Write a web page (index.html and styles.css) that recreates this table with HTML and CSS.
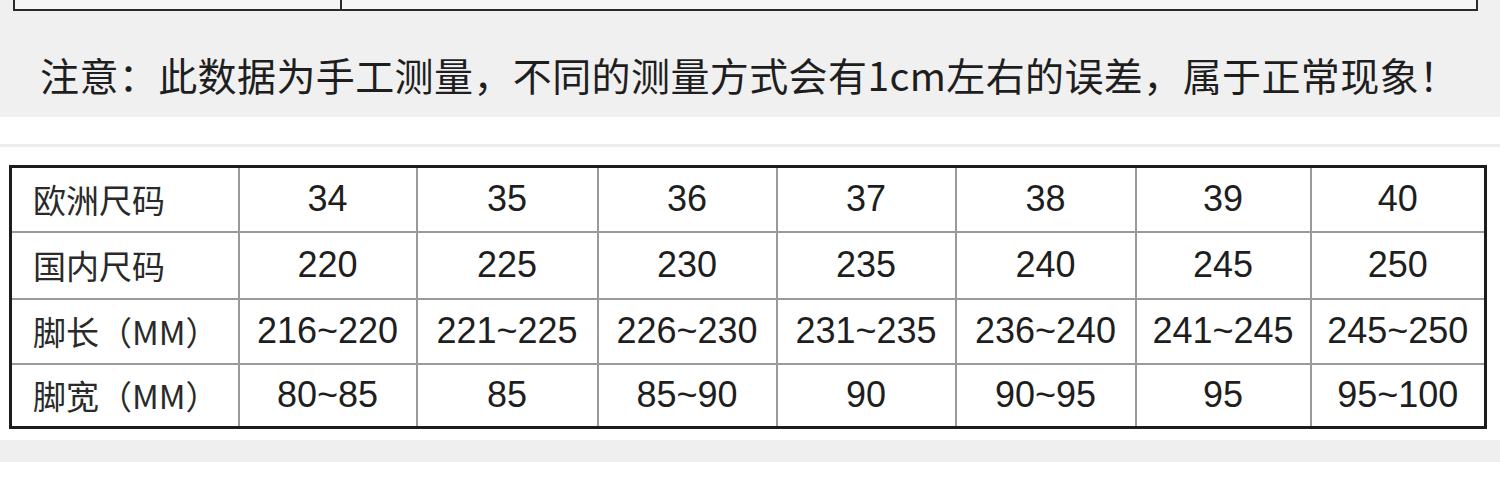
FILE: index.html
```html
<!DOCTYPE html>
<html lang="zh-CN">
<head>
<meta charset="utf-8">
<title>尺码表</title>
<link rel="stylesheet" href="styles.css">
</head>
<body>
<section class="top">
  <div class="prev-table">
    <div class="prev-cell prev-first"></div>
    <div class="prev-cell"></div>
  </div>
  <p class="notice">注意：此数据为手工测量，不同的测量方式会有1cm左右的误差，属于正常现象！</p>
</section>
<div class="gap"></div>
<section class="table-wrap">
  <table class="size-table">
    <colgroup>
      <col class="c-label">
      <col class="c1"><col class="c2"><col class="c3"><col class="c4"><col class="c5"><col class="c6"><col class="c7">
    </colgroup>
    <tbody>
      <tr class="r1">
        <th>欧洲尺码</th><td>34</td><td>35</td><td>36</td><td>37</td><td>38</td><td>39</td><td>40</td>
      </tr>
      <tr class="r2">
        <th>国内尺码</th><td>220</td><td>225</td><td>230</td><td>235</td><td>240</td><td>245</td><td>250</td>
      </tr>
      <tr class="r3">
        <th>脚长（MM）</th><td>216~220</td><td>221~225</td><td>226~230</td><td>231~235</td><td>236~240</td><td>241~245</td><td>245~250</td>
      </tr>
      <tr class="r4">
        <th>脚宽（MM）</th><td>80~85</td><td>85</td><td>85~90</td><td>90</td><td>90~95</td><td>95</td><td>95~100</td>
      </tr>
    </tbody>
  </table>
</section>
<div class="band"></div>
</body>
</html>
```

FILE: styles.css
```css
html, body {
  margin: 0;
  padding: 0;
  background: #ffffff;
}

body {
  width: 1500px;
  height: 500px;
  overflow: hidden;
  font-family: "Noto Sans CJK SC", "Liberation Sans", sans-serif;
  color: #222;
}

.top {
  background: #f0f0f0;
  height: 117px;
  display: flex;
  flex-direction: column;
}

.prev-table {
  margin-left: 13px;
  width: 1465px;
  height: 11px;
  box-sizing: border-box;
  border: 2px solid #2a2a2a;
  border-top: none;
  background: #f5f5f5;
  display: flex;
}

.prev-cell {
  flex: 1;
}

.prev-first {
  flex: 0 0 325px;
  border-right: 2px solid #2a2a2a;
}

.notice {
  margin: 0;
  padding: 35px 0 0 40px;
  font-size: 39px;
  line-height: 56px;
  color: #1e1e1e;
  letter-spacing: 0.4px;
}

.gap {
  height: 27px;
  border-bottom: 3px solid #ededed;
}

.table-wrap {
  padding: 18px 0 0 9px;
  height: 293px;
  box-sizing: border-box;
}

.size-table {
  border-collapse: collapse;
  table-layout: fixed;
  width: 1478px;
  border: 3px solid #1c1c1c;
  background: #ffffff;
}

.c-label { width: 228px; }
.c1 { width: 178px; }
.c2 { width: 181px; }
.c3 { width: 179px; }
.c4 { width: 179px; }
.c5 { width: 180px; }
.c6 { width: 175px; }
.c7 { width: 175px; }

.size-table th,
.size-table td {
  border: 2px solid #9a9a9a;
  padding: 0;
  white-space: nowrap;
  overflow: hidden;
}

.size-table th {
  text-align: left;
  padding-left: 21px;
  font-family: "Noto Sans CJK SC", sans-serif;
  font-weight: 400;
  font-size: 33px;
  color: #2a2a2a;
}

.size-table td {
  text-align: center;
  font-family: "Liberation Sans", Arial, sans-serif;
  font-size: 36px;
  color: #1e1e1e;
}

.r1 { height: 65px; }
.r2 { height: 67px; }
.r3 { height: 65px; }
.r4 { height: 64px; }

.band {
  height: 22px;
  background: #efefef;
}
```
